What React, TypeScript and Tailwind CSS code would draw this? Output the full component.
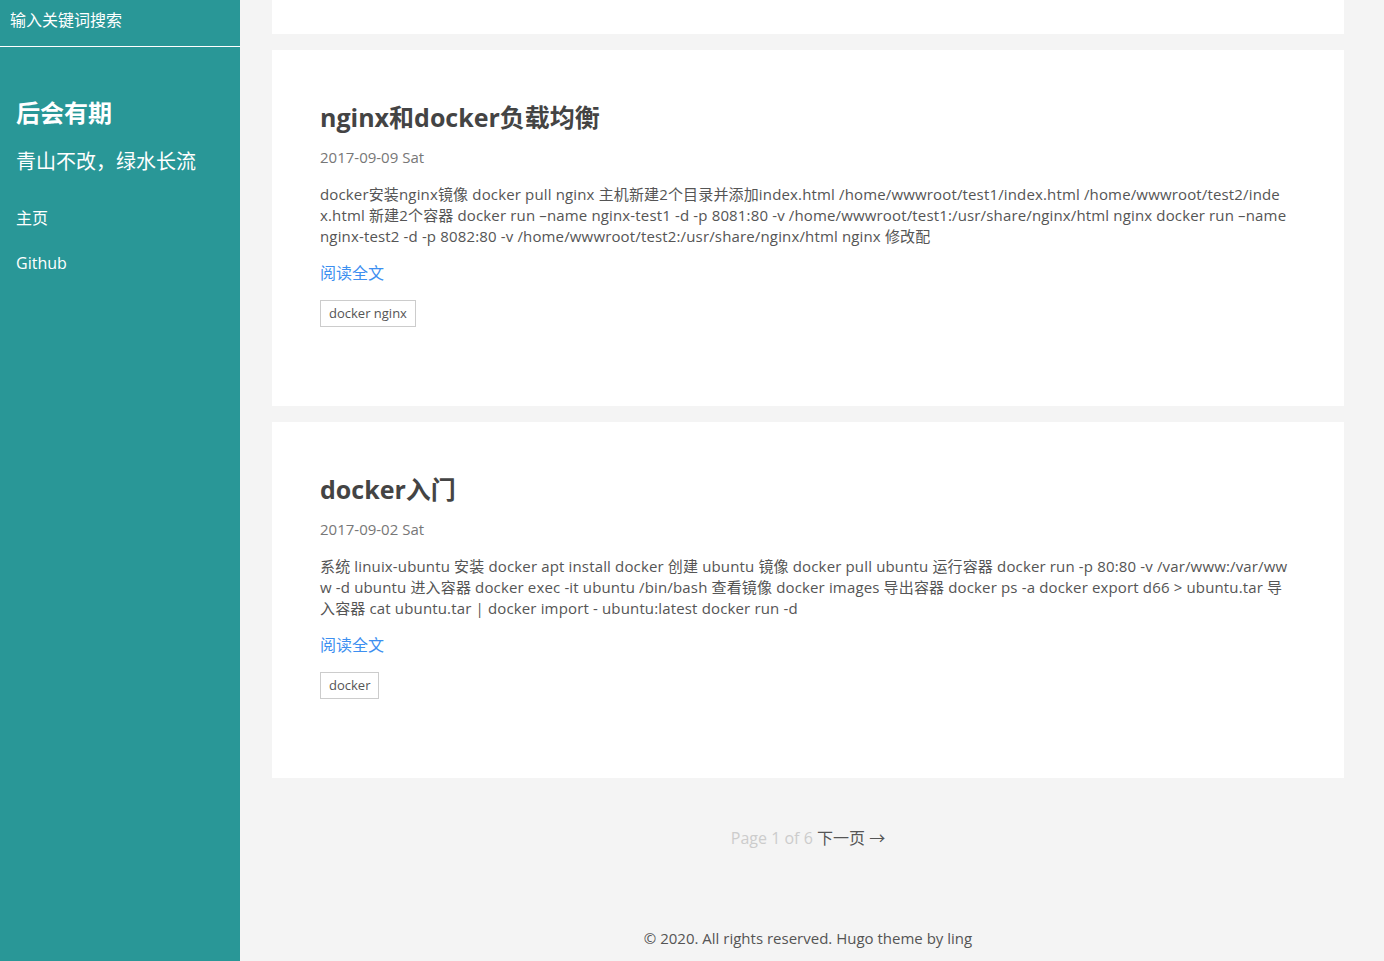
const font = { fontFamily: '"Open Sans", "Noto Sans CJK SC", sans-serif' };

type Post = {
  title: string;
  date: string;
  lines: string[];
  tag: string;
};

const posts: Post[] = [
  {
    title: 'nginx和docker负载均衡',
    date: '2017-09-09 Sat',
    lines: [
      'docker安装nginx镜像 docker pull nginx 主机新建2个目录并添加index.html /home/wwwroot/test1/index.html /home/wwwroot/test2/inde',
      'x.html 新建2个容器 docker run –name nginx-test1 -d -p 8081:80 -v /home/wwwroot/test1:/usr/share/nginx/html nginx docker run –name',
      'nginx-test2 -d -p 8082:80 -v /home/wwwroot/test2:/usr/share/nginx/html nginx 修改配',
    ],
    tag: 'docker nginx',
  },
  {
    title: 'docker入门',
    date: '2017-09-02 Sat',
    lines: [
      '系统 linuix-ubuntu 安装 docker apt install docker 创建 ubuntu 镜像 docker pull ubuntu 运行容器 docker run -p 80:80 -v /var/www:/var/ww',
      'w -d ubuntu 进入容器 docker exec -it ubuntu /bin/bash 查看镜像 docker images 导出容器 docker ps -a docker export d66 > ubuntu.tar 导',
      '入容器 cat ubuntu.tar | docker import - ubuntu:latest docker run -d',
    ],
    tag: 'docker',
  },
];

const PostCard = ({ post }: { post: Post }) => (
  <div className="overflow-hidden bg-white px-12 pt-[48px] pb-[79px]">
    <h2 className="text-[25px] font-bold leading-[38px] text-[#444]">{post.title}</h2>
    <p className="mt-[11px] text-[15px] leading-[20px] text-[#777]">{post.date}</p>
    <div className="mt-[17px] text-[15px] leading-[21px] tracking-[0.15px] whitespace-nowrap text-[#555]">
      {post.lines.map((l, i) => (
        <div key={i}>{l}</div>
      ))}
    </div>
    <a className="mt-[14px] block text-[16px] leading-[24px] text-[#3d8ff0]">阅读全文</a>
    <div className="mt-[15px] flex">
      <span className="border border-[#ccc] px-2 text-[13px] leading-[25px] text-[#555]">{post.tag}</span>
    </div>
  </div>
);

export default function App() {
  return (
    <div className="flex h-[961px] overflow-hidden bg-[#f4f4f4]" style={font}>
      {/* Sidebar */}
      <aside className="w-[240px] shrink-0 bg-[#299797] text-white">
        <div className="h-[47px] border-b border-white pl-[10px] pt-[9px] text-[16px] leading-[22px]">
          输入关键词搜索
        </div>
        <div className="px-4">
          <h1 className="mt-[50px] text-[24px] font-bold leading-[32px]">后会有期</h1>
          <p className="mt-[19px] text-[20px] leading-[28px]">青山不改，绿水长流</p>
          <ul className="mt-[30px] space-y-[21px] text-[16px] leading-[24px]">
            <li>主页</li>
            <li>Github</li>
          </ul>
        </div>
      </aside>

      {/* Main */}
      <main className="flex min-w-0 flex-1 flex-col pl-8 pr-[40px]">
        <div className="h-[34px] bg-white" />
        <div className="mt-4 flex flex-col gap-4">
          {posts.map((p) => (
            <PostCard key={p.title} post={p} />
          ))}
        </div>
        <div className="mt-[48px] text-center text-[16px] leading-[24px]">
          <span className="text-[#ccc]">Page 1 of 6 </span>
          <span className="text-[#555]">下一页 →</span>
        </div>
        <div className="mt-[77px] text-center text-[15px] leading-[22px] text-[#555]">
          © 2020. All rights reserved. Hugo theme by ling
        </div>
      </main>
    </div>
  );
}
